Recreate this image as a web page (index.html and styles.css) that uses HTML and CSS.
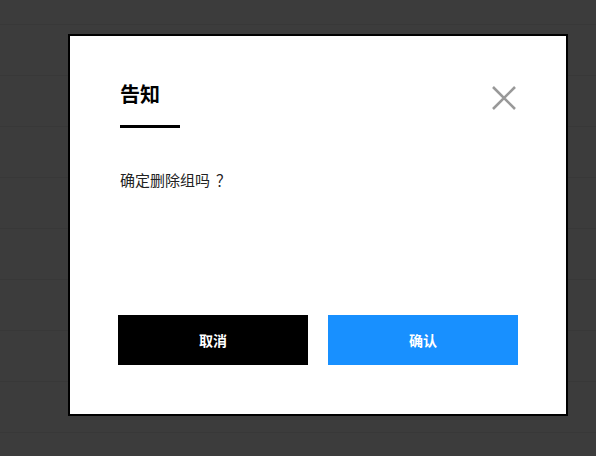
FILE: index.html
```html
<!DOCTYPE html>
<html lang="zh-CN">
<head>
    <meta charset="UTF-8">
    <meta name="viewport" content="width=device-width, initial-scale=1.0">
    <title>告知</title>
    <link rel="stylesheet" href="styles.css">
</head>
<body>
    <div class="mask">
        <div class="dialog">
            <div class="dialog-head">
                <div class="dialog-title">
                    <h3>告知</h3>
                    <div class="title-line"></div>
                </div>
                <button type="button" class="close" aria-label="关闭">
                    <svg width="24" height="24" viewBox="0 0 24 24">
                        <path d="M1 1 L23 23 M23 1 L1 23" stroke="#999" stroke-width="2.6" fill="none"/>
                    </svg>
                </button>
            </div>
            <p class="dialog-text">确定删除组吗<span class="qmark">？</span></p>
            <div class="dialog-foot">
                <button type="button" class="btn btn-cancel">取消</button>
                <button type="button" class="btn btn-ok">确认</button>
            </div>
        </div>
    </div>
</body>
</html>
```

FILE: styles.css
```css
html, body {
    margin: 0;
    height: 100%;
}
body {
    font-family: "Noto Sans CJK SC", "Noto Sans", sans-serif;
    background-color: #3c3c3c;
}
.mask {
    height: 100%;
    box-sizing: border-box;
    padding: 34px 0 0 68px;
    /* 背景表格的行线 */
    background: repeating-linear-gradient(to bottom, #3c3c3c 0, #3c3c3c 24px, #383838 24px, #383838 25px, #3c3c3c 25px, #3c3c3c 51px);
}
.dialog {
    width: 500px;
    height: 382px;
    box-sizing: border-box;
    border: 2px solid #000;
    background-color: #fff;
    padding: 44px 50px 49px 50px;
    display: flex;
    flex-direction: column;
}
.dialog-head {
    display: flex;
    justify-content: space-between;
    align-items: flex-start;
}
.dialog-title h3 {
    margin: 0;
    font-size: 20px;
    line-height: 28px;
    font-weight: bold;
    color: #000;
}
.title-line {
    width: 60px;
    height: 3px;
    margin-top: 17px;
    background-color: #000;
}
.close {
    border: 0;
    padding: 0;
    margin-top: 6px;
    background: none;
    width: 24px;
    height: 24px;
    cursor: pointer;
}
.close svg {
    display: block;
}
.dialog-text {
    margin: 41px 0 0 0;
    font-size: 15px;
    line-height: 21px;
    color: #222;
}
.qmark {
    margin-left: 6px;
}
.dialog-foot {
    margin-top: auto;
    margin-left: -2px;
    margin-right: -2px;
    display: flex;
    gap: 20px;
}
.btn {
    flex: 1;
    height: 50px;
    border: 0;
    font-family: inherit;
    font-size: 14px;
    font-weight: bold;
    color: #fff;
    cursor: pointer;
}
.btn-cancel {
    background-color: #000;
}
.btn-ok {
    background-color: #1890ff;
}
```
